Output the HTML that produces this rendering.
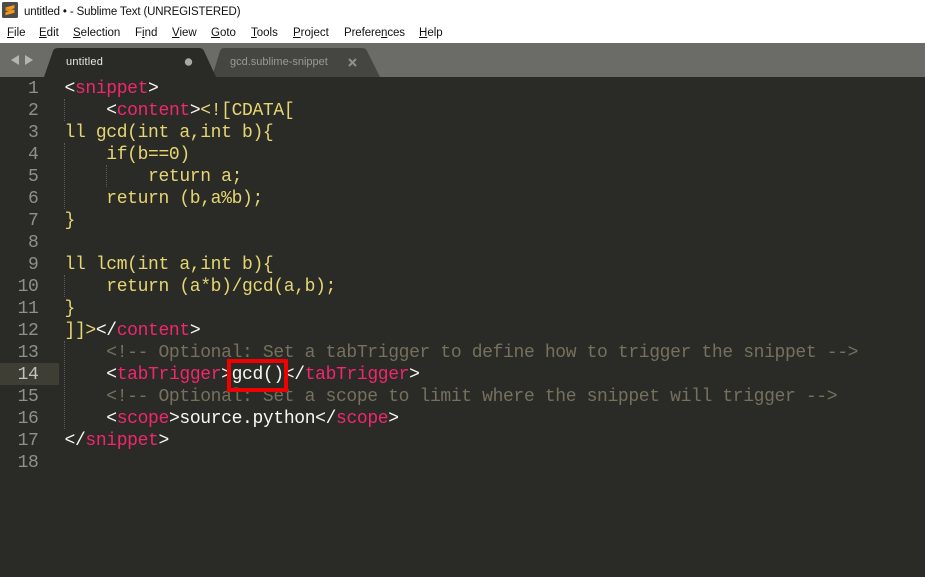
<!DOCTYPE html>
<html><head><meta charset="utf-8">
<style>
html,body{margin:0;padding:0;width:925px;height:577px;overflow:hidden;background:#fff}
#r{position:relative;width:925px;height:577px;overflow:hidden;font-family:"Liberation Sans",sans-serif}
.a{position:absolute;white-space:pre}
.m{position:absolute;top:26px;font-size:11.5px;line-height:14px;color:#111;white-space:pre}
#bar{position:absolute;left:0;top:43px;width:925px;height:34px}
#ed{position:absolute;left:0;top:77px;width:925px;height:500px;background:#2a2b26}
.l{position:absolute;left:64.5px;height:22px;line-height:24px;font-family:"Liberation Mono",monospace;font-size:18px;letter-spacing:-.36px;color:#e6d672;white-space:pre}
.n{position:absolute;left:0;width:38.5px;text-align:right;height:22px;line-height:24px;font-family:"Liberation Mono",monospace;font-size:18px;letter-spacing:-.36px;color:#8f908a}
.w{color:#f8f8f2}.p{color:#f0266f}.c{color:#75715e}
.g{position:absolute;width:0;border-left:1px dotted #5a5b55}
</style></head><body><div id="r">

<svg class="a" style="left:0;top:0" width="24" height="24" viewBox="0 0 24 24">
<rect x="2" y="2" width="16" height="16" rx="1.500" fill="#4b4b49"/>
<path d="M5.500 7.500L14.500 5V8.200L5.500 10.700Z" fill="#f29a1f"/>
<path d="M5.500 7.500L14.500 10V13L5.500 10.500Z" fill="#e08a1a"/>
<path d="M5.500 12.300L14.500 9.800V12.800L5.500 15.300Z" fill="#f29a1f"/>
</svg>
<div class="a" style="left:24px;top:5px;font-size:11.5px;letter-spacing:-.15px;line-height:14px;color:#111">untitled • - Sublime Text (UNREGISTERED)</div>

<div class="m" style="left:7px"><u>F</u>ile</div>
<div class="m" style="left:39px"><u>E</u>dit</div>
<div class="m" style="left:73px"><u>S</u>election</div>
<div class="m" style="left:135px">F<u>i</u>nd</div>
<div class="m" style="left:172px"><u>V</u>iew</div>
<div class="m" style="left:211px"><u>G</u>oto</div>
<div class="m" style="left:251px"><u>T</u>ools</div>
<div class="m" style="left:293px"><u>P</u>roject</div>
<div class="m" style="left:344px;letter-spacing:-.1px">Prefere<u>n</u>ces</div>
<div class="m" style="left:419px"><u>H</u>elp</div>

<svg id="bar" width="925" height="34" viewBox="0 43 925 34">
<rect x="0" y="43" width="925" height="34" fill="#6b6c67"/>
<path d="M212 77L220 51Q221 48 224 48H362Q366 48 367 51L380 77Z" fill="#454641"/>
<path d="M44 77L53 51Q54 48 58 48H199Q203 48 204 51L216 77Z" fill="#2a2b26"/>
<path d="M11 60L19 55V65Z" fill="#b4b5b1"/>
<path d="M33 60L25 55V65Z" fill="#b4b5b1"/>
<circle cx="188.500" cy="62" r="3.700" fill="#a8a8a5"/>
<path d="M349 59L356 66M356 59L349 66" stroke="#8f908c" stroke-width="2"/>
</svg>
<div class="a" style="left:66px;top:55px;font-size:11px;letter-spacing:.2px;line-height:14px;color:#e8e8e4">untitled</div>
<div class="a" style="left:230px;top:55px;font-size:11px;line-height:14px;color:#999a96">gcd.sublime-snippet</div>

<div id="ed"></div>
<div class="a" style="left:0;top:363px;width:59px;height:22px;background:#3e3e34"></div>

<div class="g" style="left:64px;top:99px;height:22px"></div>
<div class="g" style="left:64px;top:143px;height:66px"></div>
<div class="g" style="left:106px;top:165px;height:22px"></div>
<div class="g" style="left:64px;top:275px;height:22px"></div>
<div class="g" style="left:64px;top:341px;height:88px"></div>

<div class="n" style="top:77px">1</div>
<div class="n" style="top:99px">2</div>
<div class="n" style="top:121px">3</div>
<div class="n" style="top:143px">4</div>
<div class="n" style="top:165px">5</div>
<div class="n" style="top:187px">6</div>
<div class="n" style="top:209px">7</div>
<div class="n" style="top:231px">8</div>
<div class="n" style="top:253px">9</div>
<div class="n" style="top:275px">10</div>
<div class="n" style="top:297px">11</div>
<div class="n" style="top:319px">12</div>
<div class="n" style="top:341px">13</div>
<div class="n" style="top:363px;color:#c2c2bd">14</div>
<div class="n" style="top:385px">15</div>
<div class="n" style="top:407px">16</div>
<div class="n" style="top:429px">17</div>
<div class="n" style="top:451px">18</div>

<div class="l" style="top:77px"><span class="w">&lt;</span><span class="p">snippet</span><span class="w">&gt;</span></div>
<div class="l" style="top:99px">    <span class="w">&lt;</span><span class="p">content</span><span class="w">&gt;</span>&lt;![CDATA[</div>
<div class="l" style="top:121px">ll gcd(int a,int b){</div>
<div class="l" style="top:143px">    if(b==0)</div>
<div class="l" style="top:165px">        return a;</div>
<div class="l" style="top:187px">    return (b,a%b);</div>
<div class="l" style="top:209px">}</div>
<div class="l" style="top:253px">ll lcm(int a,int b){</div>
<div class="l" style="top:275px">    return (a*b)/gcd(a,b);</div>
<div class="l" style="top:297px">}</div>
<div class="l" style="top:319px">]]&gt;<span class="w">&lt;/</span><span class="p">content</span><span class="w">&gt;</span></div>
<div class="l c" style="top:341px">    &lt;!-- Optional: Set a tabTrigger to define how to trigger the snippet --&gt;</div>
<div class="l" style="top:363px">    <span class="w">&lt;</span><span class="p">tabTrigger</span><span class="w">&gt;gcd()&lt;/</span><span class="p">tabTrigger</span><span class="w">&gt;</span></div>
<div class="l c" style="top:385px">    &lt;!-- Optional: Set a scope to limit where the snippet will trigger --&gt;</div>
<div class="l" style="top:407px">    <span class="w">&lt;</span><span class="p">scope</span><span class="w">&gt;source.python&lt;/</span><span class="p">scope</span><span class="w">&gt;</span></div>
<div class="l" style="top:429px"><span class="w">&lt;/</span><span class="p">snippet</span><span class="w">&gt;</span></div>

<div class="a" style="left:227px;top:359px;width:53px;height:25px;border:4px solid #f00000"></div>
</div></body></html>
